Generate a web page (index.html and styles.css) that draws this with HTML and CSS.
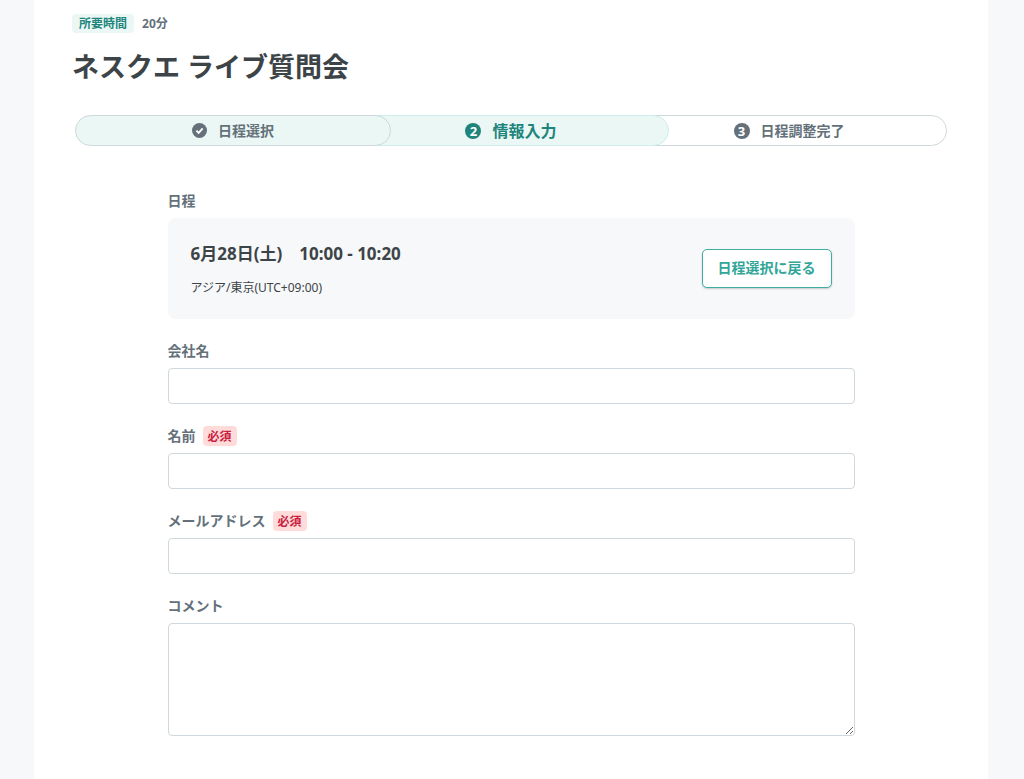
FILE: index.html
```html
<!DOCTYPE html>
<html lang="ja">
<head>
    <meta charset="UTF-8">
    <meta name="viewport" content="width=device-width, initial-scale=1.0">
    <title>ネスクエ ライブ質問会</title>
    <link rel="stylesheet" href="styles.css">
</head>
<body>

    <main class="panel">
        <header>
            <div class="duration">
                <span class="duration-tag">所要時間</span>
                <span>20分</span>
            </div>
            <h1>ネスクエ ライブ質問会</h1>
        </header>

        <!-- ステップ -->
        <ol class="steps">
            <li class="step done">
                <svg class="step-check" viewBox="0 0 16 16" aria-hidden="true">
                    <circle cx="8" cy="8" r="8" fill="currentColor"/>
                    <path d="M4.7 8.2 L7.1 10.5 L11.4 5.8" fill="none" stroke="#fff" stroke-width="2"/>
                </svg>
                <span class="step-name">日程選択</span>
            </li>
            <li class="step current" aria-current="step">
                <span class="step-number">2</span>
                <span class="step-name">情報入力</span>
            </li>
            <li class="step">
                <span class="step-number">3</span>
                <span class="step-name">日程調整完了</span>
            </li>
        </ol>

        <form class="form">
            <section class="field">
                <h2 class="label">日程</h2>
                <div class="schedule">
                    <div>
                        <p class="schedule-date">6月28日(土)　10:00 - 10:20</p>
                        <p class="schedule-zone">アジア/東京(UTC+09:00)</p>
                    </div>
                    <button type="button" class="back">日程選択に戻る</button>
                </div>
            </section>

            <div class="field">
                <label class="label" for="company">会社名</label>
                <input class="input" type="text" id="company" name="company">
            </div>

            <div class="field">
                <label class="label" for="name">名前 <span class="required">必須</span></label>
                <input class="input" type="text" id="name" name="name" required>
            </div>

            <div class="field">
                <label class="label" for="email">メールアドレス <span class="required">必須</span></label>
                <input class="input" type="email" id="email" name="email" required>
            </div>

            <div class="field">
                <label class="label" for="comment">コメント</label>
                <textarea class="input comment" id="comment" name="comment"></textarea>
            </div>
        </form>
    </main>

</body>
</html>
```
FILE: styles.css
```css
* {
    box-sizing: border-box;
}
body {
    margin: 0;
    padding: 0 36px 0 34px;
    background-color: #f7f8fa;
    color: #3d4447;
    font-family: "Noto Sans", "Noto Sans CJK JP", sans-serif;
    font-size: 14px;
}
h1, h2, p, ol {
    margin: 0;
    padding: 0;
}
.panel {
    max-width: 954px;
    min-height: 100vh;
    margin: 0 auto;
    padding: 14px 38px 40px;
    background-color: #fff;
}
.duration {
    display: flex;
    align-items: center;
    gap: 8px;
    color: #64717a;
    font-size: 12px;
    font-weight: bold;
    line-height: 19px;
}
.duration-tag {
    padding: 0 7px;
    border-radius: 4px;
    background-color: #eaf7f5;
    color: #1f857c;
}
h1 {
    margin-top: 14px;
    font-size: 27px;
    line-height: 40px;
}
.steps {
    display: flex;
    margin: 28px 3px 0;
    list-style: none;
}
.step {
    position: relative;
    display: flex;
    flex: 1;
    align-items: center;
    justify-content: center;
    gap: 11px;
    height: 31px;
    border: 1px solid #cfd8db;
    border-radius: 16px;
    background-color: #fff;
    color: #64717a;
    font-weight: bold;
}
.step + .step {
    margin-left: -38px;
}
.step.done {
    z-index: 2;
    background-color: #eaf7f5;
}
.step.current {
    z-index: 1;
    border-color: #cdeeea;
    background-color: #eaf7f5;
    color: #1f857c;
    font-size: 16px;
}
.step-name {
    padding-bottom: 2px;
}
.step-check {
    width: 15px;
    height: 15px;
}
.step-number {
    width: 16px;
    height: 16px;
    border-radius: 50%;
    background-color: #64717a;
    color: #fff;
    font-size: 13px;
    line-height: 16px;
    text-align: center;
}
.current .step-number {
    background-color: #1f857c;
}
.form {
    max-width: 687px;
    margin: 45px auto 0;
}
.field {
    display: flex;
    flex-direction: column;
    gap: 7px;
    margin-bottom: 22px;
}
.label {
    display: flex;
    align-items: flex-start;
    gap: 7px;
    height: 20px;
    color: #64717a;
    font-size: 14px;
    font-weight: bold;
    line-height: 20px;
}
.required {
    padding: 2px 5px 0;
    border-radius: 4px;
    background-color: #ffdcda;
    color: #c9213f;
    font-size: 12px;
    line-height: 18px;
}
.schedule {
    display: flex;
    align-items: center;
    justify-content: space-between;
    min-height: 101px;
    padding: 20px 23px;
    border-radius: 8px;
    background-color: #f7f8fa;
}
.schedule-date {
    font-size: 17px;
    font-weight: bold;
    line-height: 28px;
}
.schedule-zone {
    margin-top: 10px;
    font-size: 12px;
    line-height: 20px;
}
.back {
    height: 39px;
    padding: 0 15px 3px;
    border: 1px solid #3fada1;
    border-radius: 5px;
    background-color: #fff;
    box-shadow: 0 1px 2px rgba(0, 0, 0, 0.2);
    color: #30a598;
    font-family: inherit;
    font-size: 14px;
    font-weight: bold;
    cursor: pointer;
}
.input {
    width: 100%;
    height: 36px;
    padding: 8px 12px;
    border: 1px solid #cfd8dc;
    border-radius: 4px;
    background-color: #fff;
    color: inherit;
    font: inherit;
}
.comment {
    height: 113px;
    resize: vertical;
}
.input:focus {
    border-color: #30a598;
    outline: none;
}
```
